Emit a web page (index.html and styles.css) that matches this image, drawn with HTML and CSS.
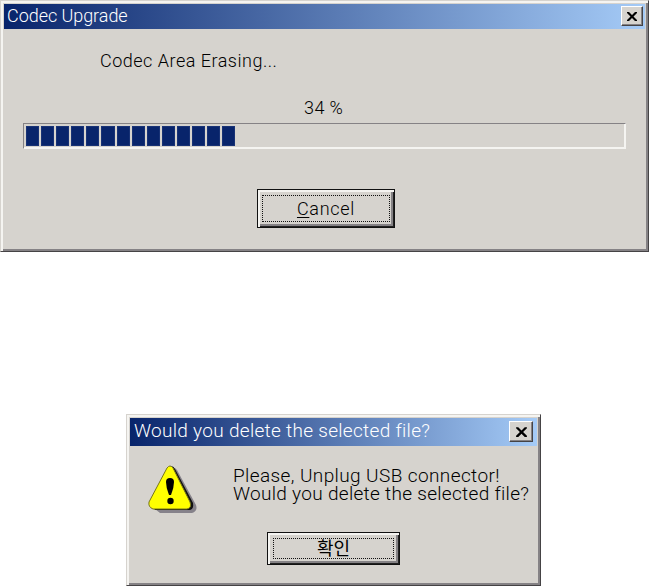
FILE: index.html
```html
<!DOCTYPE html>
<html lang="en">
<head>
<meta charset="utf-8">
<title>Codec Upgrade</title>
<link rel="stylesheet" href="styles.css">
</head>
<body>
<section class="window upgrade">
  <header class="titlebar">
    <span class="title">Codec Upgrade</span>
    <button class="close" aria-label="Close"><svg width="12" height="11" viewBox="0 0 12 11"><path d="M1 1h2l3 3 3-3h2v1L7.500 5.500 11 9v1H9L6 7l-3 3H1V9l3.500-3.500L1 2z"/></svg></button>
  </header>
  <div class="status">Codec Area Erasing...</div>
  <div class="percent">34 %</div>
  <div class="progress"><i></i><i></i><i></i><i></i><i></i><i></i><i></i><i></i><i></i><i></i><i></i><i></i><i></i><i></i></div>
  <button class="action cancel"><span class="focus"><span class="caption"><u>C</u>ancel</span></span></button>
</section>
<section class="window confirm">
  <header class="titlebar">
    <span class="title">Would you delete the selected file?</span>
    <button class="close" aria-label="Close"><svg width="13" height="12" viewBox="0 0 12 11"><path d="M1 1h2l3 3 3-3h2v1L7.500 5.500 11 9v1H9L6 7l-3 3H1V9l3.500-3.500L1 2z"/></svg></button>
  </header>
  <div class="message">
    <svg class="warning" width="50" height="52" viewBox="0 0 50 52">
      <path d="M23 6Q26 3 29 7L48 42Q50 48 44 50H12L7 46z" fill="#86828a"/>
      <path d="M22 4Q25 2 27 6L45 40Q46 46 42 47H7L5 44z" fill="#111"/>
      <path d="M19 5Q22 1 25 5L42 39Q44 45 39 46H5Q0 44 1 39z" fill="#ff0" stroke="#77751b"/>
      <path d="M18 19Q18 15 22 15T26 19Q26 25 23 32H21Q18 25 18 19z"/>
      <circle cx="22.500" cy="38" r="3.200"/>
    </svg>
    <p class="lines"><span class="first">Please, Unplug USB connector!</span><br><span class="second">Would you delete the selected file?</span></p>
  </div>
  <button class="action ok"><span class="focus"><span class="caption">확인</span></span></button>
</section>
</body>
</html>
```
FILE: styles.css
```css
* { box-sizing: border-box; }
body {
  margin: 0;
  width: 649px;
  height: 586px;
  overflow: hidden;
  background: #fff;
  color: #000;
  font: 300 18px/20px Roboto, "Noto Sans CJK KR", sans-serif;
  white-space: nowrap;
}
button { font: inherit; color: inherit; padding: 0; }
.window {
  display: flex;
  flex-direction: column;
  background: #d6d3ce;
  border: 1px solid;
  border-color: #d6d3ce #454345 #454345 #d6d3ce;
  box-shadow: inset 2px 2px #f5f4f1, inset -2px -2px #858285;
}
.upgrade { height: 252px; padding: 3px; }
.titlebar {
  display: flex;
  justify-content: space-between;
  background: linear-gradient(90deg, #08246b, #a5cbf7);
  color: #fff;
  flex: none;
}
.upgrade .titlebar { height: 25px; padding: 2px 2px 0 3px; }
.close {
  display: flex;
  align-items: center;
  justify-content: center;
  width: 22px;
  height: 20px;
  background: #d6d3ce;
  border: 1px solid;
  border-color: #fff #454345 #454345 #fff;
  box-shadow: inset -1px -1px #858285;
}
.title { line-height: 20px; }
.upgrade .title { letter-spacing: -.05px; }
.status { margin: 22px 0 0 96px; height: 20px; letter-spacing: .5px; }
.percent { margin: 27px 0 0 300px; height: 20px; letter-spacing: .4px; }
.progress {
  display: flex;
  gap: 2px;
  width: 603px;
  height: 26px;
  margin: 5px 0 0 19px;
  padding: 2px;
  border: 1px solid;
  border-color: #858285 #f5f4f1 #f5f4f1 #858285;
  box-shadow: inset -1px -1px #f5f4f1;
}
.progress i { width: 13.100px; height: 20px; background: #08246b; border: 1px solid #183275; }
.action {
  flex: none;
  background: #d6d3ce;
  border: 1px solid #111;
  box-shadow: inset 2px 2px #f5f4f1, inset -1px -1px #222, inset -3px -3px #858285;
}
.focus {
  display: flex;
  align-items: flex-start;
  justify-content: center;
  height: 100%;
  border: 1px dotted #111;
}
.cancel { width: 138px; height: 39px; margin: 40px 0 0 253px; padding: 5px 4px; }
.cancel .caption { margin: 3px 0 0; letter-spacing: .7px; }
.cancel u { text-underline-offset: 2px; text-decoration-thickness: 1px; }
.confirm { width: 415px; height: 172px; margin: 162px 0 0 126px; padding: 3px; }
.confirm .titlebar { height: 28px; padding: 3px 4px 0; }
.confirm .title { font-size: 19px; letter-spacing: .3px; }
.confirm .close { width: 24px; height: 21px; }
.message { display: flex; margin: 17px 0 0 18px; height: 52px; }
.lines { margin: 4px 0 0 35px; font-size: 19px; line-height: 18px; }
.first { letter-spacing: .4px; }
.second { letter-spacing: .3px; }
.ok { width: 133px; height: 33px; margin: 17px 0 0 137px; padding: 5px; }
.ok .focus { height: 21px; }
.ok .caption { margin-top: -2px; font: 18px/20px "Noto Sans CJK KR", sans-serif; }
```
